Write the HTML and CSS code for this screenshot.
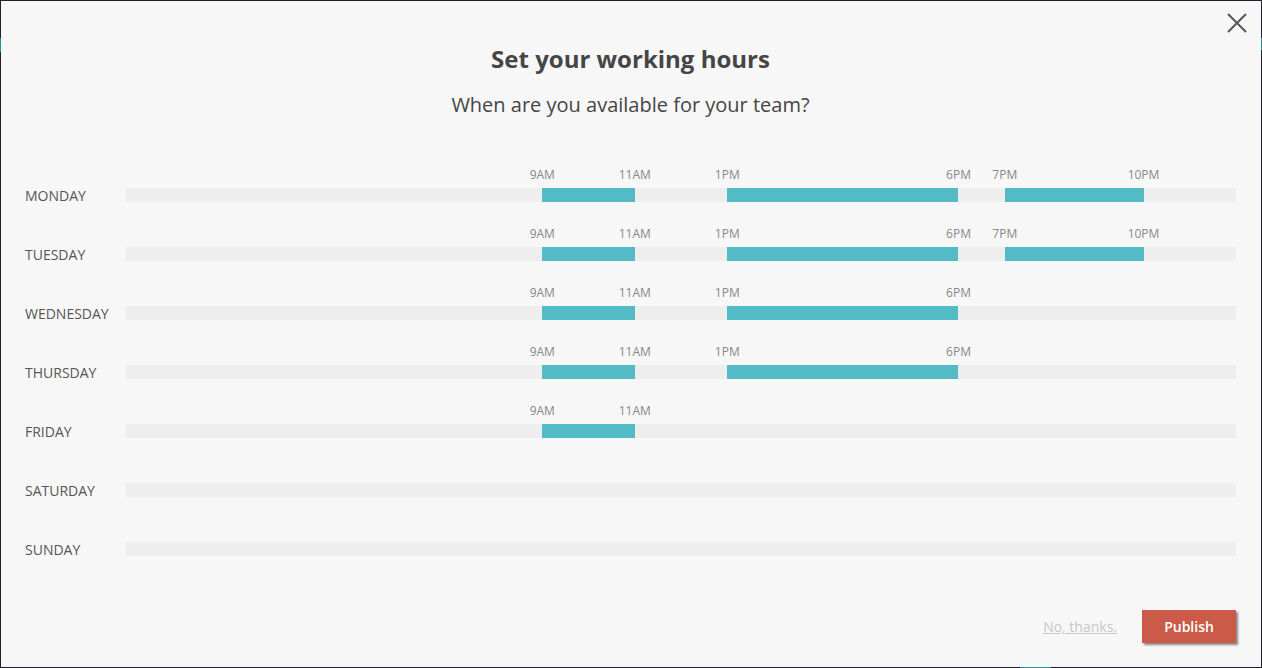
FILE: index.html
```html
<!DOCTYPE html>
<html lang="en">
<head>
<meta charset="utf-8">
<title>Set your working hours</title>
<link rel="stylesheet" href="styles.css">
</head>
<body>
<div class="bg-mark bg-mark-left"></div>
<div class="bg-mark bg-mark-right"></div>
<div class="bg-mark bg-mark-bottom"></div>
<div class="modal">
  <button class="close" aria-label="Close">
    <svg width="22" height="22" viewBox="0 0 22 22"><path d="M2 2 L20 20 M20 2 L2 20" stroke="#555" stroke-width="2" fill="none"/></svg>
  </button>
  <header class="head">
    <h1 class="title">Set your working hours</h1>
    <p class="subtitle">When are you available for your team?</p>
  </header>
  <div class="days">
    <div class="row">
      <div class="day">MONDAY</div>
      <div class="ticks">
        <span class="tick" style="left:37.5%">9AM</span><span class="tick" style="left:45.8333%">11AM</span>
        <span class="tick" style="left:54.1667%">1PM</span><span class="tick" style="left:75%">6PM</span>
        <span class="tick" style="left:79.1667%">7PM</span><span class="tick" style="left:91.6667%">10PM</span>
      </div>
      <div class="track">
        <span class="seg" style="left:37.5%;width:8.3333%"></span>
        <span class="seg" style="left:54.1667%;width:20.8333%"></span>
        <span class="seg" style="left:79.1667%;width:12.5%"></span>
      </div>
    </div>
    <div class="row">
      <div class="day">TUESDAY</div>
      <div class="ticks">
        <span class="tick" style="left:37.5%">9AM</span><span class="tick" style="left:45.8333%">11AM</span>
        <span class="tick" style="left:54.1667%">1PM</span><span class="tick" style="left:75%">6PM</span>
        <span class="tick" style="left:79.1667%">7PM</span><span class="tick" style="left:91.6667%">10PM</span>
      </div>
      <div class="track">
        <span class="seg" style="left:37.5%;width:8.3333%"></span>
        <span class="seg" style="left:54.1667%;width:20.8333%"></span>
        <span class="seg" style="left:79.1667%;width:12.5%"></span>
      </div>
    </div>
    <div class="row">
      <div class="day">WEDNESDAY</div>
      <div class="ticks">
        <span class="tick" style="left:37.5%">9AM</span><span class="tick" style="left:45.8333%">11AM</span>
        <span class="tick" style="left:54.1667%">1PM</span><span class="tick" style="left:75%">6PM</span>
      </div>
      <div class="track">
        <span class="seg" style="left:37.5%;width:8.3333%"></span>
        <span class="seg" style="left:54.1667%;width:20.8333%"></span>
      </div>
    </div>
    <div class="row">
      <div class="day">THURSDAY</div>
      <div class="ticks">
        <span class="tick" style="left:37.5%">9AM</span><span class="tick" style="left:45.8333%">11AM</span>
        <span class="tick" style="left:54.1667%">1PM</span><span class="tick" style="left:75%">6PM</span>
      </div>
      <div class="track">
        <span class="seg" style="left:37.5%;width:8.3333%"></span>
        <span class="seg" style="left:54.1667%;width:20.8333%"></span>
      </div>
    </div>
    <div class="row">
      <div class="day">FRIDAY</div>
      <div class="ticks">
        <span class="tick" style="left:37.5%">9AM</span><span class="tick" style="left:45.8333%">11AM</span>
      </div>
      <div class="track">
        <span class="seg" style="left:37.5%;width:8.3333%"></span>
      </div>
    </div>
    <div class="row">
      <div class="day">SATURDAY</div>
      <div class="ticks"></div>
      <div class="track"></div>
    </div>
    <div class="row">
      <div class="day">SUNDAY</div>
      <div class="ticks"></div>
      <div class="track"></div>
    </div>
  </div>
  <footer class="foot">
    <a class="skip" href="#">No, thanks.</a>
    <button class="publish">Publish</button>
  </footer>
</div>
</body>
</html>
```
FILE: styles.css
```css
* { box-sizing: border-box; }
html, body { margin: 0; padding: 0; }
body {
  background: #1f202c;
  padding: 1px;
  font-family: "Open Sans", "Noto Sans", sans-serif;
  position: relative;
  height: 668px;
  overflow: hidden;
}
.bg-mark { position: absolute; background: #2b8e97; }
.bg-mark-left { left: 0; top: 38px; width: 1px; height: 14px; }
.bg-mark-right { right: 0; top: 38px; width: 1px; height: 12px; }
.bg-mark-bottom { left: 1020px; bottom: 0; width: 31px; height: 1px; }
.modal {
  position: relative;
  width: 1260px;
  height: 666px;
  background: #f7f7f7;
  padding: 42px 25px 0 24px;
}
.close {
  position: absolute;
  top: 11px;
  right: 13px;
  width: 22px;
  height: 22px;
  padding: 0;
  border: 0;
  background: none;
  cursor: pointer;
}
.close svg { display: block; }
.head { text-align: center; }
.title {
  margin: 0;
  font-size: 24px;
  line-height: 32px;
  font-weight: 700;
  color: #454545;
}
.subtitle {
  margin: 16px 0 0;
  font-size: 20px;
  line-height: 28px;
  color: #454545;
}
.days { margin-top: 47px; }
.row {
  display: grid;
  grid-template-columns: 101px 1fr;
  grid-template-rows: 22px 14px;
  margin-bottom: 23px;
}
.row:last-child { margin-bottom: 0; }
.day {
  grid-column: 1;
  grid-row: 2;
  align-self: center;
  font-size: 14px;
  line-height: 14px;
  color: #555;
  padding-top: 1px;
}
.ticks {
  grid-column: 2;
  grid-row: 1;
  position: relative;
}
.tick {
  position: absolute;
  top: 1px;
  transform: translateX(-50%);
  font-size: 12px;
  line-height: 16px;
  color: #888;
  white-space: nowrap;
}
.track {
  grid-column: 2;
  grid-row: 2;
  position: relative;
  background: #eeeeee;
}
.seg {
  position: absolute;
  top: 0;
  bottom: 0;
  background: #52bbc6;
}
.foot {
  margin-top: 54px;
  display: flex;
  justify-content: flex-end;
  align-items: center;
  gap: 25px;
}
.skip {
  font-size: 14px;
  color: #c8c8c8;
  text-decoration: underline;
}
.publish {
  width: 94px;
  height: 33px;
  border: 0;
  background: #cb5a48;
  color: #fff;
  font-family: "Open Sans", "Noto Sans", sans-serif;
  font-size: 14px;
  font-weight: 600;
  box-shadow: 2px 2px 2px rgba(0, 0, 0, 0.45);
  cursor: pointer;
}
```
